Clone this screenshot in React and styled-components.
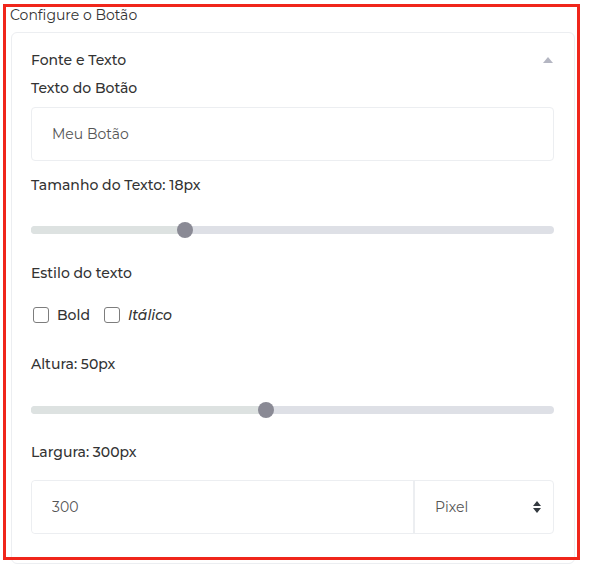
import React, { useState } from 'react';
import styled, { createGlobalStyle } from 'styled-components';

const GlobalStyle = createGlobalStyle`
  html, body {
    margin: 0;
    padding: 0;
    background: #fff;
  }
  body {
    font-family: Montserrat, "DejaVu Sans", "Noto Sans", sans-serif;
    color: #333;
  }
`;

const App = () => {
  const [fontSize, setFontSize] = useState(18);
  const [height, setHeight] = useState(50);
  const [bold, setBold] = useState(false);
  const [italic, setItalic] = useState(false);

  return (
    <>
      <GlobalStyle />
      <Page>
        <Title>Configure o Botão</Title>
        <Card>
          <CardHeader>
            <span>Fonte e Texto</span>
            <Caret />
          </CardHeader>
          <Label $top={8}>Texto do Botão</Label>
          <TextInput defaultValue="Meu Botão" />

          <Label $top={14}>Tamanho do Texto: {fontSize}px</Label>
          <Slider min={8} max={42} value={fontSize} onChange={setFontSize} />

          <Label $top={29}>Estilo do texto</Label>
          <CheckRow>
            <Check>
              <Box type="checkbox" checked={bold} onChange={() => setBold(!bold)} />
              <span>Bold</span>
            </Check>
            <Check $italic>
              <Box type="checkbox" checked={italic} onChange={() => setItalic(!italic)} />
              <span>Itálico</span>
            </Check>
          </CheckRow>

          <Label $top={29}>Altura: {height}px</Label>
          <Slider min={10} max={99} value={height} onChange={setHeight} top={32} />

          <Label $top={28}>Largura: 300px</Label>
          <Group>
            <GroupInput defaultValue="300" />
            <UnitSelect>
              <span>Pixel</span>
              <Arrows />
            </UnitSelect>
          </Group>
        </Card>
        <Highlight />
      </Page>
    </>
  );
};

const Slider = ({ min, max, value, onChange, top = 31 }) => {
  const p = (value - min) / (max - min);
  return (
    <Track $top={top}>
      <Fill style={{ width: `${p * 100}%` }} />
      <Thumb style={{ left: `${p * 100}%` }} />
      <HiddenRange
        type="range"
        min={min}
        max={max}
        value={value}
        onChange={(e) => onChange(Number(e.target.value))}
      />
    </Track>
  );
};

const Caret = () => (
  <svg width="10" height="6" viewBox="0 0 10 6">
    <path d="M0 6 L5 0 L10 6 Z" fill="#b4b6c2" />
  </svg>
);

const Arrows = () => (
  <svg width="8" height="12" viewBox="0 0 8 12">
    <path d="M0 5 L4 0 L8 5 Z M0 7 L4 12 L8 7 Z" fill="#343a40" />
  </svg>
);

export default App;

const Page = styled.div`
  position: relative;
  width: 590px;
  height: 575px;
  padding: 5px 0 0 11px;
  box-sizing: border-box;
`;

const Title = styled.div`
  font-size: 14px;
  line-height: 20px;
  color: #333;
  margin-left: -1px;
`;

const Card = styled.div`
  margin-top: 7px;
  width: 564px;
  height: 532px;
  box-sizing: border-box;
  border: 1px solid #eceef1;
  border-radius: 6px;
  padding: 17px 20px 0 19px;
  display: flex;
  flex-direction: column;
`;

const CardHeader = styled.div`
  display: flex;
  justify-content: space-between;
  align-items: center;
  font-size: 14px;
  font-weight: 500;
  line-height: 20px;
  color: #333;
  padding-right: 1px;
`;

const Label = styled.div`
  margin-top: ${(p) => p.$top}px;
  font-size: 14px;
  font-weight: 500;
  line-height: 20px;
  color: #333;
`;

const TextInput = styled.input`
  margin-top: 9px;
  height: 54px;
  box-sizing: border-box;
  border: 1px solid #eceef1;
  border-radius: 4px;
  padding: 0 20px;
  font-family: inherit;
  font-size: 14px;
  color: #555;
  outline: none;
`;

const Track = styled.div`
  position: relative;
  margin-top: ${(p) => p.$top}px;
  height: 8px;
  border-radius: 4px;
  background: #dee0e6;
`;

const Fill = styled.div`
  height: 100%;
  border-radius: 4px 0 0 4px;
  background: #dde2e1;
`;

const Thumb = styled.div`
  position: absolute;
  top: 50%;
  width: 16px;
  height: 16px;
  margin: -8px 0 0 -8px;
  border-radius: 50%;
  background: #8a8a95;
`;

const HiddenRange = styled.input`
  position: absolute;
  inset: -6px 0;
  width: 100%;
  margin: 0;
  opacity: 0;
  cursor: pointer;
`;

const CheckRow = styled.div`
  display: flex;
  gap: 14px;
  margin-top: 22px;
  height: 20px;
  padding-left: 2px;
`;

const Check = styled.label`
  display: flex;
  align-items: center;
  gap: 8px;
  font-size: 14px;
  font-weight: 500;
  font-style: ${(p) => (p.$italic ? 'italic' : 'normal')};
  color: #333;
  cursor: pointer;
`;

const Box = styled.input`
  appearance: none;
  margin: 0;
  width: 16px;
  height: 16px;
  border: 1px solid #7d7d7d;
  border-radius: 3px;
  background: #fff;
  &:checked {
    background: #8a8a95;
  }
`;

const Group = styled.div`
  display: flex;
  margin-top: 18px;
  height: 54px;
  border: 1px solid #eceef1;
  border-radius: 4px;
  box-sizing: border-box;
`;

const GroupInput = styled.input`
  flex: 1;
  min-width: 0;
  border: none;
  border-right: 2px solid #eceef1;
  border-radius: 4px 0 0 4px;
  padding: 0 20px;
  font-family: inherit;
  font-size: 14px;
  color: #555;
  outline: none;
`;

const UnitSelect = styled.div`
  width: 138px;
  display: flex;
  align-items: center;
  justify-content: space-between;
  padding: 0 12px 0 20px;
  box-sizing: border-box;
  font-size: 14px;
  color: #555;
`;

const Highlight = styled.div`
  position: absolute;
  left: 3px;
  top: 4px;
  width: 577px;
  height: 556px;
  box-sizing: border-box;
  border: 3px solid #f0261b;
  pointer-events: none;
`;
